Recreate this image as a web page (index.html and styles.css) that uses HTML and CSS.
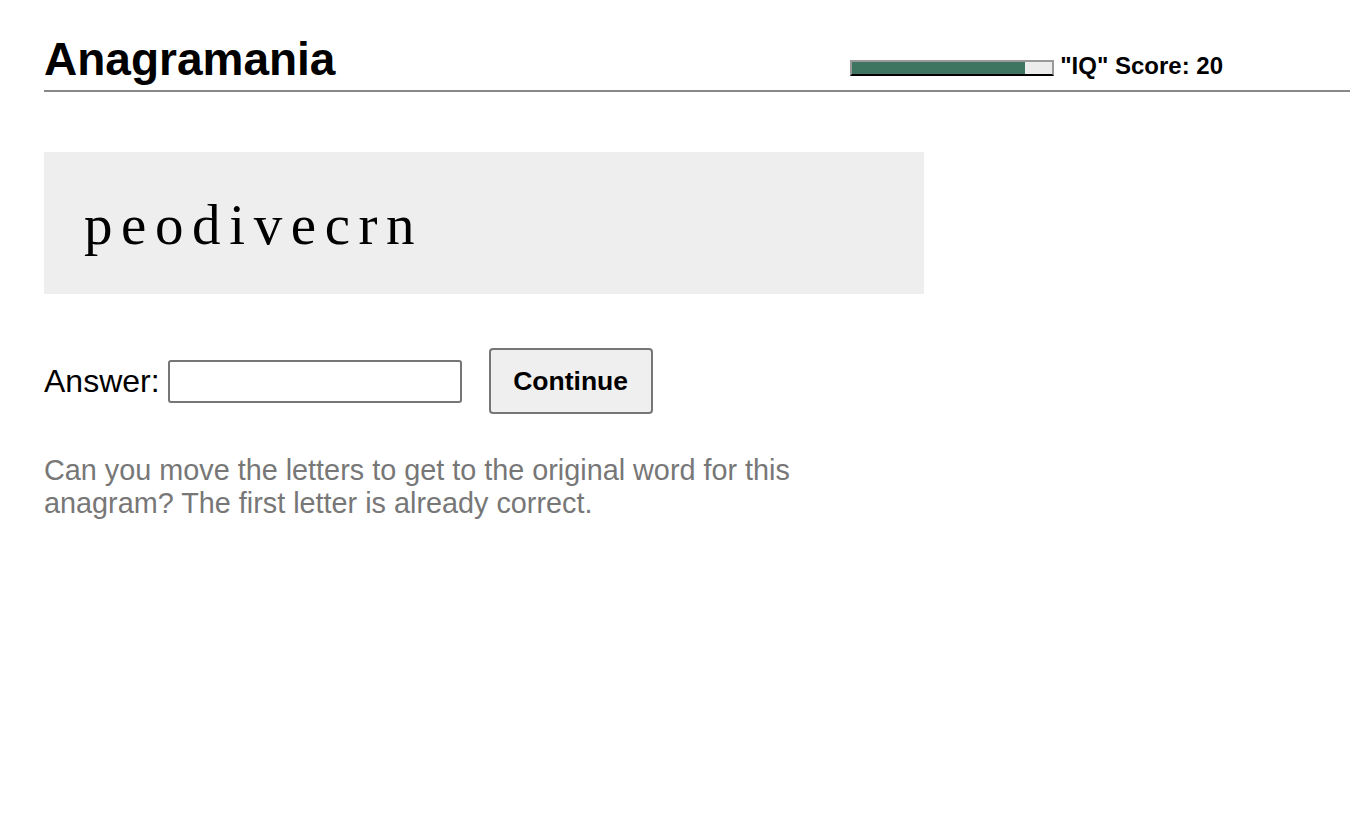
FILE: index.html
```html
<!DOCTYPE html>
<html>
<head>
<meta charset="utf-8">
<title>Anagramania</title>
<link rel="stylesheet" href="styles.css">
</head>
<body>
<div class="page">
  <header class="header">
    <h1 class="title">Anagramania</h1>
    <div class="score">
      <div class="bar"><div class="bar-fill" style="width: 86.5%"></div></div>
      <span class="score-text">"IQ" Score: 20</span>
    </div>
  </header>
  <div class="puzzle">
    <span class="letters">peodivecrn</span>
  </div>
  <form class="answer-row">
    <label class="answer-label" for="answer">Answer:</label>
    <input class="answer-input" id="answer" type="text">
    <button class="continue" type="button">Continue</button>
  </form>
  <p class="hint">Can you move the letters to get to the original word for this anagram? The first letter is already correct.</p>
</div>
</body>
</html>
```
FILE: styles.css
```css
html, body {
  margin: 0;
  padding: 0;
  background: #fff;
}
body {
  font-family: "Liberation Sans", Arial, sans-serif;
  color: #000;
}
.page {
  padding-left: 44px;
}
.header {
  display: flex;
  align-items: flex-end;
  justify-content: space-between;
  border-bottom: 2px solid #888;
  height: 92px;
  box-sizing: border-box;
  padding-right: 127px;
  padding-bottom: 4px;
}
.title {
  margin: 0;
  font-size: 46px;
  font-weight: bold;
  line-height: 54px;
}
.score {
  display: flex;
  align-items: center;
  gap: 6px;
  margin-bottom: 6px;
}
.bar {
  width: 200px;
  height: 12px;
  margin-top: 4px;
  border: 2px solid #999;
  border-bottom-color: #000;
  background: #ececec;
}
.bar-fill {
  height: 100%;
  background: #3d7561;
}
.score-text {
  font-size: 24px;
  font-weight: bold;
  line-height: 28px;
}
.puzzle {
  margin-top: 60px;
  width: 880px;
  height: 142px;
  background: #eeeeee;
  box-sizing: border-box;
  padding-left: 40px;
  display: flex;
  align-items: center;
}
.letters {
  font-family: "Liberation Serif", "Times New Roman", serif;
  font-size: 57px;
  letter-spacing: 8.6px;
  line-height: 1;
  margin-top: 2px;
}
.answer-row {
  margin: 54px 0 0;
  display: flex;
  align-items: center;
}
.answer-label {
  font-size: 32px;
  margin-right: 8px;
}
.answer-input {
  width: 294px;
  height: 43px;
  box-sizing: border-box;
  border: 2px solid #767676;
  border-radius: 3px;
  padding: 0 6px;
  font-size: 24px;
  font-family: "Liberation Sans", Arial, sans-serif;
  margin: 0 27px 0 0;
}
.continue {
  width: 164px;
  height: 66px;
  box-sizing: border-box;
  background: #efefef;
  border: 2px solid #767676;
  border-radius: 4px;
  font-family: "Liberation Sans", Arial, sans-serif;
  font-size: 26.5px;
  font-weight: bold;
  color: #000;
  padding: 0;
}
.hint {
  margin: 40px 0 0;
  width: 800px;
  font-size: 28.8px;
  line-height: 33px;
  color: #777;
}
```
